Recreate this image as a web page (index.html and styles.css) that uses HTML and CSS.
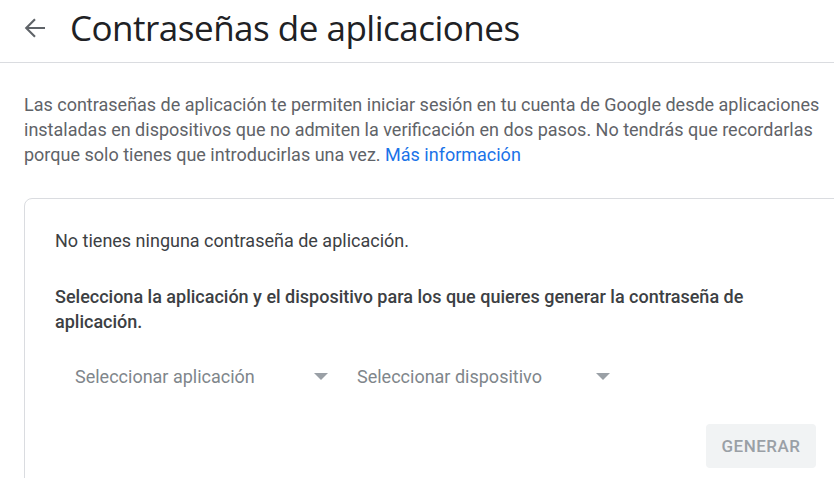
FILE: index.html
```html
<!DOCTYPE html>
<html lang="es">
<head>
<meta charset="utf-8">
<title>Contraseñas de aplicaciones</title>
<link rel="stylesheet" href="styles.css">
</head>
<body>
<header class="topbar">
  <button class="back" aria-label="Atrás">
    <svg width="30" height="30" viewBox="0 0 24 24"><path d="M20 12H5M12 5l-7 7 7 7" fill="none" stroke="#5f6368" stroke-width="1.7"/></svg>
  </button>
  <h1 class="title">Contraseñas de aplicaciones</h1>
</header>
<main class="content">
  <p class="intro">Las contraseñas de aplicación te permiten iniciar sesión en tu cuenta de Google desde aplicaciones instaladas en dispositivos que no admiten la verificación en dos pasos. No tendrás que recordarlas porque solo tienes que introducirlas una vez. <a href="#" class="link">Más información</a></p>
  <section class="card">
    <p class="empty">No tienes ninguna contraseña de aplicación.</p>
    <p class="prompt">Selecciona la aplicación y el dispositivo para los que quieres generar la contraseña de aplicación.</p>
    <div class="selects">
      <div class="select"><span>Seleccionar aplicación</span><i class="caret"></i></div>
      <div class="select"><span>Seleccionar dispositivo</span><i class="caret"></i></div>
    </div>
    <div class="actions">
      <button class="generate" disabled>GENERAR</button>
    </div>
  </section>
</main>
</body>
</html>
```
FILE: styles.css
```css
html, body {
  margin: 0;
  padding: 0;
  background: #fff;
  overflow: hidden;
  font-family: Roboto, "Liberation Sans", Arial, sans-serif;
}
.topbar {
  display: flex;
  align-items: center;
  height: 55px;
  padding-bottom: 7px;
  border-bottom: 1px solid #dadce0;
  box-sizing: content-box;
}
.back {
  border: 0;
  background: none;
  padding: 0;
  margin-left: 20px;
  width: 30px;
  height: 30px;
  display: flex;
  align-items: center;
  justify-content: center;
}
.back svg { width: 30px; height: 30px; display: block; }
.title {
  margin: 0 0 0 20px;
  font-family: "Open Sans", Roboto, sans-serif;
  font-weight: 400;
  font-size: 35px;
  color: #202124;
  letter-spacing: -0.5px;
}
.content {
  padding: 29px 0 0 24px;
}
.intro {
  margin: 0;
  font-size: 18px;
  line-height: 25px;
  color: #5f6368;
}
.link {
  color: #1a73e8;
  text-decoration: none;
}
.card {
  margin-top: 31px;
  margin-right: -30px;
  border: 1px solid #dadce0;
  border-radius: 8px;
  padding: 29px 47px 20px 30px;
}
.empty {
  margin: 0;
  font-size: 18px;
  line-height: 25px;
  color: #3c4043;
}
.prompt {
  margin: 31px 0 0;
  font-size: 18px;
  line-height: 25px;
  font-weight: 500;
  color: #3c4043;
}
.selects {
  display: flex;
  margin-top: 18px;
}
.select {
  width: 282px;
  height: 48px;
  display: flex;
  align-items: center;
  justify-content: space-between;
  padding: 0 9px 0 20px;
  box-sizing: border-box;
  font-size: 18px;
  color: #80868b;
}
.caret {
  width: 0;
  height: 0;
  border-left: 7px solid transparent;
  border-right: 7px solid transparent;
  border-top: 7px solid #9aa0a6;
}
.actions {
  display: flex;
  justify-content: flex-end;
  margin-top: 24px;
}
.generate {
  width: 110px;
  height: 44px;
  border: 0;
  border-radius: 4px;
  background: #f1f3f4;
  color: #9aa0a6;
  font-family: Roboto, sans-serif;
  font-size: 17px;
  font-weight: 500;
  letter-spacing: 0.5px;
}
```
